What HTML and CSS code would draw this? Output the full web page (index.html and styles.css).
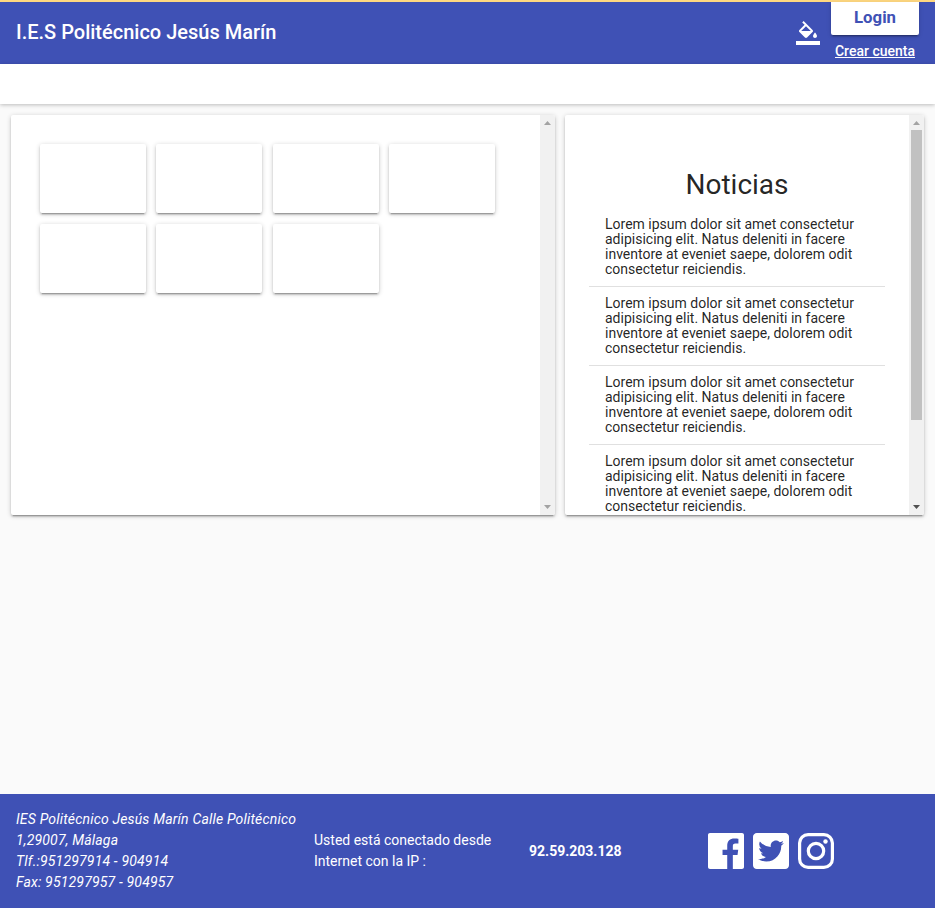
FILE: index.html
```html
<!DOCTYPE html>
<html lang="es">
<head>
<meta charset="utf-8">
<title>I.E.S Politécnico Jesús Marín</title>
<link rel="stylesheet" href="styles.css">
</head>
<body>
<header class="toolbar">
  <h1 class="brand">I.E.S Politécnico Jesús Marín</h1>
  <svg class="fill-icon" viewBox="0 0 24 24"><path d="M16.56 8.94L7.62 0 6.21 1.41l2.38 2.38-5.15 5.15c-.59.59-.59 1.54 0 2.12l5.5 5.5c.29.29.68.44 1.06.44s.77-.15 1.06-.44l5.5-5.5c.59-.58.59-1.53 0-2.12zM5.21 10L10 5.21 14.79 10H5.21zM19 11.5s-2 2.17-2 3.5c0 1.1.9 2 2 2s2-.9 2-2c0-1.33-2-3.5-2-3.5zM0 20h24v4H0z"/></svg>
  <div class="account">
    <button class="login">Login</button>
    <a class="signup">Crear cuenta</a>
  </div>
</header>
<nav class="subnav"></nav>
<main class="content">
  <section class="panel panel-apps">
    <div class="tiles">
      <div class="tile"></div><div class="tile"></div><div class="tile"></div><div class="tile"></div>
      <div class="tile"></div><div class="tile"></div><div class="tile"></div>
    </div>
    <div class="scrollbar">
      <svg class="arrow" viewBox="0 0 15 15"><path d="M4 10h7L7.5 6z"/></svg>
      <div class="track"></div>
      <svg class="arrow" viewBox="0 0 15 15"><path d="M4 5h7L7.5 9z"/></svg>
    </div>
  </section>
  <section class="panel panel-news">
    <div class="news">
      <h2 class="news-title">Noticias</h2>
      <p class="item">Lorem ipsum dolor sit amet consectetur adipisicing elit. Natus deleniti in facere inventore at eveniet saepe, dolorem odit consectetur reiciendis.</p>
      <p class="item">Lorem ipsum dolor sit amet consectetur adipisicing elit. Natus deleniti in facere inventore at eveniet saepe, dolorem odit consectetur reiciendis.</p>
      <p class="item">Lorem ipsum dolor sit amet consectetur adipisicing elit. Natus deleniti in facere inventore at eveniet saepe, dolorem odit consectetur reiciendis.</p>
      <p class="item">Lorem ipsum dolor sit amet consectetur adipisicing elit. Natus deleniti in facere inventore at eveniet saepe, dolorem odit consectetur reiciendis.</p>
    </div>
    <div class="scrollbar">
      <svg class="arrow" viewBox="0 0 15 15"><path d="M4 10h7L7.5 6z"/></svg>
      <div class="track"><div class="thumb"></div></div>
      <svg class="arrow arrow-active" viewBox="0 0 15 15"><path d="M4 5h7L7.5 9z"/></svg>
    </div>
  </section>
</main>
<footer class="footer">
  <address class="address">IES Politécnico Jesús Marín Calle Politécnico<br>1,29007, Málaga<br>Tlf.:951297914 - 904914<br>Fax: 951297957 - 904957</address>
  <p class="connection">Usted está conectado desde<br>Internet con la IP :</p>
  <strong class="ip">92.59.203.128</strong>
  <div class="social">
    <svg viewBox="0 0 24 24"><path d="M22.676 0H1.324C.593 0 0 .593 0 1.324v21.352C0 23.408.593 24 1.324 24h11.494v-9.294H9.689v-3.621h3.129V8.41c0-3.099 1.894-4.785 4.659-4.785 1.325 0 2.464.097 2.796.141v3.24h-1.921c-1.5 0-1.792.721-1.792 1.771v2.311h3.584l-.465 3.63H16.56V24h6.115c.733 0 1.325-.592 1.325-1.324V1.324C24 .593 23.408 0 22.676 0z"/></svg>
    <svg viewBox="0 32 448 448"><path d="M400 32H48C21.500 32 0 53.500 0 80v352c0 26.500 21.500 48 48 48h352c26.500 0 48-21.500 48-48V80c0-26.500-21.500-48-48-48zm-48.900 158.800c.2 2.800.2 5.700.2 8.500 0 86.700-66 186.600-186.600 186.600-37.200 0-71.700-10.800-100.700-29.400 5.300.6 10.400.8 15.800.8 30.700 0 58.900-10.400 81.400-28-28.800-.6-53-19.500-61.300-45.500 10.100 1.500 19.200 1.500 29.600-1.200-30-6.100-52.500-32.500-52.500-64.400v-.8c8.700 4.900 18.900 7.900 29.600 8.300a65.447 65.447 0 0 1-29.200-54.600c0-12.200 3.200-23.400 8.900-33.100 32.300 39.800 80.800 65.800 135.200 68.600-9.300-44.500 24-80.600 64-80.600 18.900 0 35.900 7.900 47.900 20.700 14.800-2.800 29-8.300 41.600-15.800-4.900 15.200-15.200 28-28.800 36.100 13.200-1.400 26-5.100 37.800-10.200-8.900 13.100-20.100 24.700-32.900 34z"/></svg>
    <svg class="outline" viewBox="0 0 36 36"><rect x="1.600" y="1.600" width="32.800" height="32.800" rx="8.500"/><circle cx="18" cy="18" r="7.700"/><circle class="dot" cx="27.500" cy="8.500" r="2.200"/></svg>
  </div>
</footer>
</body>
</html>
```
FILE: styles.css
```css
* { box-sizing: border-box; }
body {
  display: flex;
  flex-direction: column;
  height: 908px;
  margin: 0;
  overflow: hidden;
  background: #fafafa;
  color: rgba(0, 0, 0, .87);
  font: 14px/21px Roboto, sans-serif;
}
h1, h2, p { margin: 0; }
svg { display: block; }

.toolbar {
  display: flex;
  flex: none;
  height: 64px;
  padding: 0 16px;
  border-top: 2px solid #ffd880;
  background: #3f51b5;
  color: #fff;
}
.brand {
  flex: 1;
  font-size: 20px;
  font-weight: 500;
  line-height: 60px;
}
.fill-icon {
  width: 24px;
  height: 24px;
  margin: 19px 11.300px 0 0;
  fill: #fff;
}
.account {
  display: flex;
  flex-direction: column;
  align-items: center;
  width: 88px;
}
.login {
  width: 88px;
  height: 33px;
  padding: 0 0 2px;
  border: 0;
  border-radius: 0 0 2px 2px;
  background: #fff;
  box-shadow: 0 3px 1px -2px rgba(0, 0, 0, .2), 0 2px 2px rgba(0, 0, 0, .14), 0 1px 5px rgba(0, 0, 0, .12);
  color: #3f51b5;
  font: 700 16.800px/31px Roboto, sans-serif;
}
.signup {
  margin-top: 6px;
  font-weight: 500;
  line-height: 20px;
  text-decoration: underline;
}
.subnav {
  flex: none;
  height: 40px;
  background: #fff;
  box-shadow: 0 1px 4px rgba(0, 0, 0, .25);
}

.content {
  display: flex;
  flex: 1;
  align-items: flex-start;
  gap: 10px;
  padding: 11px 11px 0;
}
.panel {
  display: flex;
  height: 400px;
  overflow: hidden;
  border-radius: 2px;
  background: #fff;
}
.panel, .tile {
  box-shadow: 0 3px 1px -2px rgba(0, 0, 0, .2), 0 2px 2px rgba(0, 0, 0, .14), 0 1px 5px rgba(0, 0, 0, .2);
}
.panel-apps { width: 544px; }
.panel-news { width: 359px; }
.tiles {
  display: grid;
  flex: 1;
  grid-template-columns: repeat(4, 106px);
  grid-auto-rows: 69px;
  align-content: start;
  gap: 11px 10.400px;
  padding: 29px;
}
.tile {
  border-radius: 2px;
  background: #fff;
}

.scrollbar {
  display: flex;
  flex: none;
  flex-direction: column;
  width: 15px;
  background: #f1f1f1;
}
.arrow {
  width: 15px;
  height: 15px;
  fill: #a3a3a3;
}
.arrow-active { fill: #505050; }
.track { flex: 1; padding: 0 2px; }
.thumb { height: 290px; background: #c1c1c1; }

.news { flex: 1; padding: 52px 24px 0; }
.news-title {
  margin-bottom: 13px;
  font-size: 28px;
  font-weight: 400;
  line-height: 36px;
  text-align: center;
}
.item {
  height: 79px;
  padding: 0 16px;
  line-height: 15px;
}
.item + .item {
  padding-top: 9px;
  border-top: 1px solid #e0e0e0;
}
.news-title + .item { height: 70px; padding-top: 1px; }

.footer {
  display: flex;
  flex: none;
  align-items: center;
  height: 114px;
  padding: 0 16px;
  background: #3f51b5;
  color: #fff;
}
.address {
  width: 298px;
  margin-bottom: 1px;
  letter-spacing: .18px;
  white-space: nowrap;
}
.connection { width: 215px; margin-bottom: 1px; }
.ip { width: 179px; }
.social { display: flex; gap: 9px; }
.social svg { width: 36px; height: 36px; fill: #fff; }
.social .outline { fill: none; stroke: #fff; stroke-width: 3.200px; }
.social .dot { fill: #fff; stroke: none; }
```
